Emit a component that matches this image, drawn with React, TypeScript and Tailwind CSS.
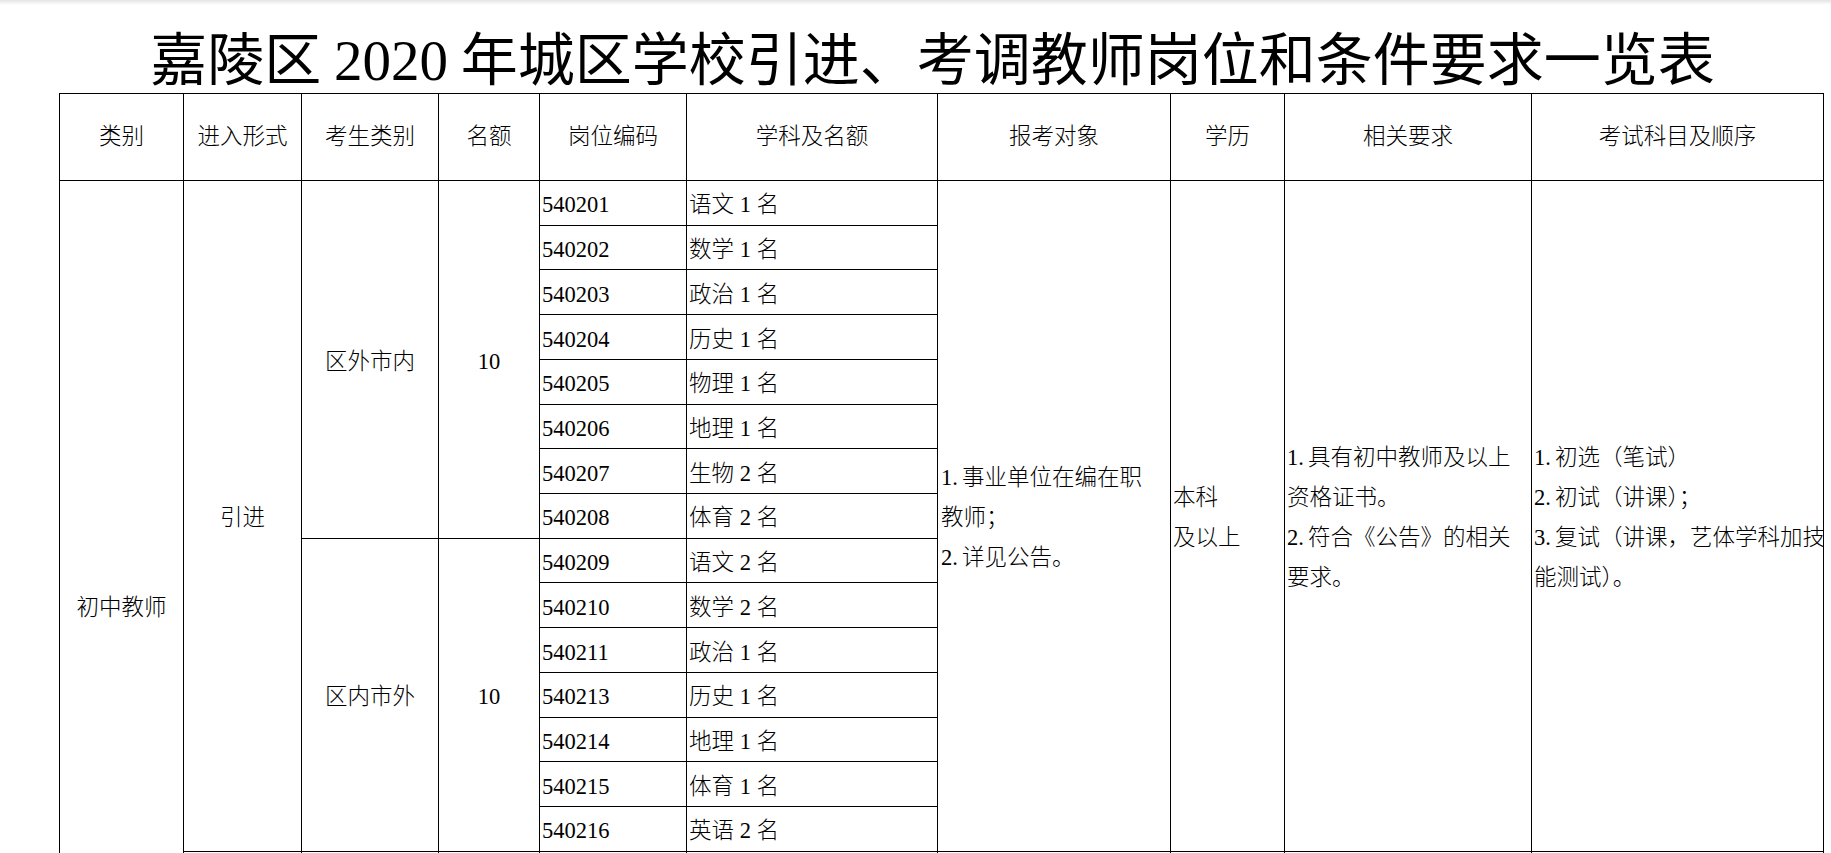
import React from "react";

const group1: [string, string][] = [
  ["540201", "语文 1 名"],
  ["540202", "数学 1 名"],
  ["540203", "政治 1 名"],
  ["540204", "历史 1 名"],
  ["540205", "物理 1 名"],
  ["540206", "地理 1 名"],
  ["540207", "生物 2 名"],
  ["540208", "体育 2 名"],
];
const group2: [string, string][] = [
  ["540209", "语文 2 名"],
  ["540210", "数学 2 名"],
  ["540211", "政治 1 名"],
  ["540213", "历史 1 名"],
  ["540214", "地理 1 名"],
  ["540215", "体育 1 名"],
  ["540216", "英语 2 名"],
];

const headers = [
  "类别",
  "进入形式",
  "考生类别",
  "名额",
  "岗位编码",
  "学科及名额",
  "报考对象",
  "学历",
  "相关要求",
  "考试科目及顺序",
];

const cell = "border-r border-b border-black";

function Num({ n }: { n: string }) {
  return <span className="inline-block w-[21px]">{n}</span>;
}

export default function App() {
  const rows = [...group1, ...group2];
  return (
    <div className="relative h-[853px] w-[1831px] overflow-hidden bg-white text-black">
      <div className="absolute left-0 right-0 top-0 h-[5px] bg-gradient-to-b from-[#e4e4e4] to-white" />
      <div className="h-[93px] pt-[26px] pl-[34px] text-center font-['Noto_Sans_CJK_SC',sans-serif] text-[57px] leading-[58px] whitespace-nowrap">
        嘉陵区 <span className="font-['Liberation_Serif',serif]">2020</span> 年城区学校引进、考调教师岗位和条件要求一览表
      </div>
      <div className="ml-[59px] grid w-fit grid-cols-[124px_118px_137px_101px_147px_251px_233px_114px_247px_292px] grid-rows-[87px_repeat(15,44.73px)_180px] border-l border-t border-black font-['Liberation_Serif','Noto_Sans_CJK_SC',serif] text-[22.5px] font-light leading-[40px]">
        {headers.map((h, i) => (
          <div
            key={h}
            className={`${cell} row-start-1 flex items-center justify-center whitespace-nowrap`}
            style={{ gridColumnStart: i + 1 }}
          >
            {h}
          </div>
        ))}

        <div className={`${cell} col-start-1 row-start-2 row-span-16 flex items-center justify-center pt-[5px]`}>
          初中教师
        </div>
        <div className={`${cell} col-start-2 row-start-2 row-span-15 flex items-center justify-center pt-[5px]`}>
          引进
        </div>
        <div className={`${cell} col-start-3 row-start-2 row-span-8 flex items-center justify-center pt-[5px]`}>
          区外市内
        </div>
        <div className={`${cell} col-start-4 row-start-2 row-span-8 flex items-center justify-center pt-[5px]`}>
          10
        </div>
        <div className={`${cell} col-start-3 row-start-10 row-span-7 flex items-center justify-center pt-[5px]`}>
          区内市外
        </div>
        <div className={`${cell} col-start-4 row-start-10 row-span-7 flex items-center justify-center pt-[5px]`}>
          10
        </div>

        {rows.map(([code, subj], i) => (
          <React.Fragment key={code}>
            <div
              className={`${cell} col-start-5 flex items-center pl-[2px] pt-[5px] whitespace-nowrap`}
              style={{ gridRowStart: i + 2 }}
            >
              {code}
            </div>
            <div
              className={`${cell} col-start-6 flex items-center pl-[2px] pt-[5px] whitespace-nowrap`}
              style={{ gridRowStart: i + 2 }}
            >
              {subj}
            </div>
          </React.Fragment>
        ))}

        <div className={`${cell} col-start-7 row-start-2 row-span-15 flex flex-col justify-center pl-[3px] pt-[4px] whitespace-nowrap`}>
          <div><Num n="1." />事业单位在编在职</div>
          <div>教师；</div>
          <div><Num n="2." />详见公告。</div>
        </div>
        <div className={`${cell} col-start-8 row-start-2 row-span-15 flex flex-col justify-center pl-[2px] pt-[4px] whitespace-nowrap`}>
          <div>本科</div>
          <div>及以上</div>
        </div>
        <div className={`${cell} col-start-9 row-start-2 row-span-15 flex flex-col justify-center pl-[2px] pt-[4px] whitespace-nowrap`}>
          <div><Num n="1." />具有初中教师及以上</div>
          <div>资格证书。</div>
          <div><Num n="2." />符合《公告》的相关</div>
          <div>要求。</div>
        </div>
        <div className={`${cell} col-start-10 row-start-2 row-span-15 flex flex-col justify-center pl-[2px] pt-[4px] whitespace-nowrap`}>
          <div><Num n="1." />初选（笔试）</div>
          <div><Num n="2." />初试（讲课）；</div>
          <div><Num n="3." />复试（讲课，艺体学科加技</div>
          <div>能测试）。</div>
        </div>

        {[2, 3, 4, 5, 6, 7, 8, 9, 10].map((c) => (
          <div
            key={c}
            className={`${cell} row-start-17`}
            style={{ gridColumnStart: c }}
          />
        ))}
      </div>
    </div>
  );
}
